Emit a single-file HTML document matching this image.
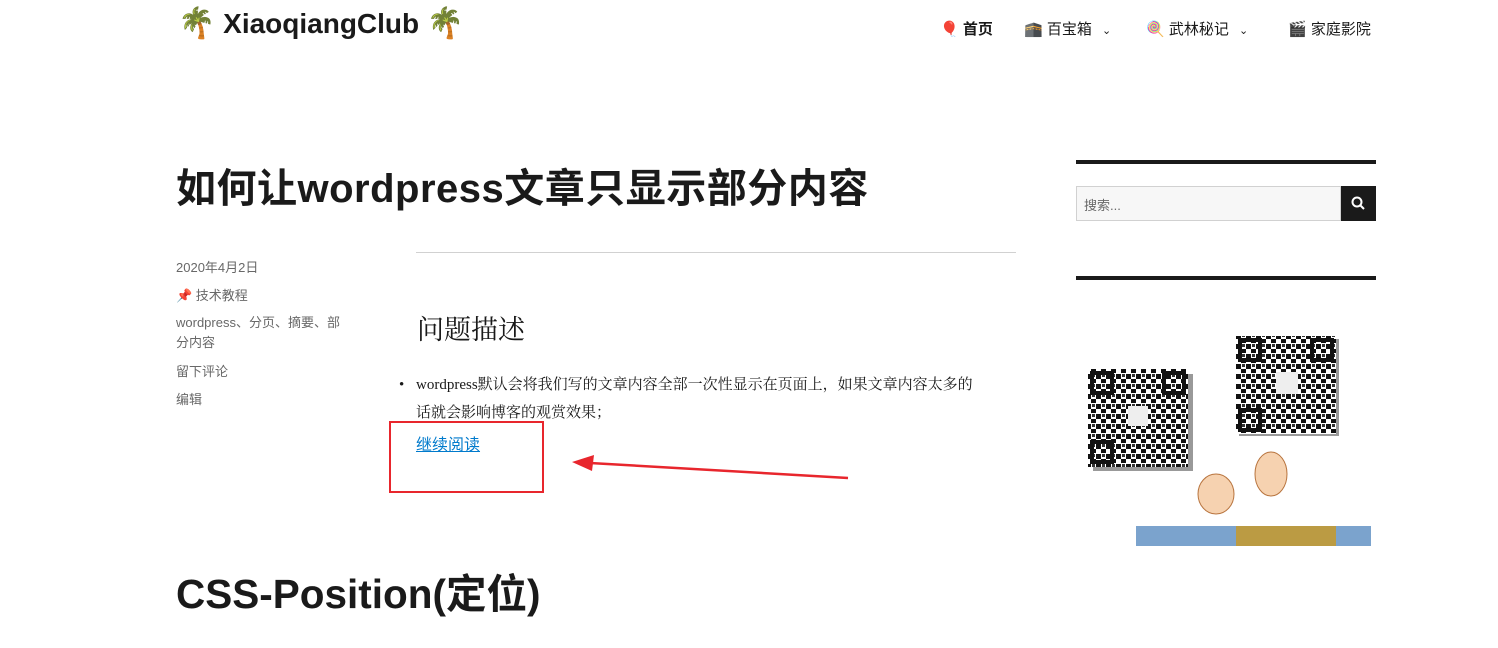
<!DOCTYPE html>
<html><head><meta charset="utf-8"><style>
*{margin:0;padding:0;box-sizing:border-box}
body{width:1498px;height:648px;background:#fff;font-family:"Liberation Sans","Noto Sans CJK SC",sans-serif;color:#1a1a1a;position:relative;overflow:hidden}
.a{position:absolute;white-space:nowrap}
.logo{left:178px;top:6px;font-size:28px;font-weight:bold}
.nav{top:18px;font-size:15px}
.meta{left:176px;font-size:13px;color:#686868}
</style></head><body>
<div class="a logo"><span style="font-size:30px">🌴</span> XiaoqiangClub <span style="font-size:30px">🌴</span></div>
<div class="a nav" style="left:940px;font-weight:bold">🎈 首页</div>
<div class="a nav" style="left:1024px">🕋 百宝箱 <span style="font-size:11px;margin-left:6px">⌄</span></div>
<div class="a nav" style="left:1146px">🍭 武林秘记 <span style="font-size:11px;margin-left:6px">⌄</span></div>
<div class="a nav" style="left:1288px">🎬 家庭影院</div>

<div class="a" style="left:176px;top:156px;font-size:40px;font-weight:bold;letter-spacing:0.5px">如何让wordpress文章只显示部分内容</div>
<div class="a meta" style="top:257px">2020年4月2日</div>
<div class="a meta" style="top:285px">📌 技术教程</div>
<div class="a meta" style="top:313px;line-height:20px;white-space:normal;width:175px">wordpress、分页、摘要、部分内容</div>
<div class="a meta" style="top:361px">留下评论</div>
<div class="a meta" style="top:389px">编辑</div>
<div class="a" style="left:416px;top:252px;width:600px;border-top:1px solid #d1d1d1"></div>
<div class="a" style="left:417px;top:308px;font-size:27px;font-family:'Liberation Serif','Noto Serif CJK SC',serif">问题描述</div>
<div class="a" style="left:399px;top:371px;font-size:15px;line-height:28px;font-family:'Liberation Serif','Noto Serif CJK SC',serif;white-space:normal;width:600px">
<span style="position:absolute;left:0">•</span><div style="margin-left:17px;width:566px">wordpress默认会将我们写的文章内容全部一次性显示在页面上，如果文章内容太多的话就会影响博客的观赏效果；</div></div>
<div class="a" style="left:416px;top:431px;font-size:16px;color:#007acc;text-decoration:underline">继续阅读</div>
<div class="a" style="left:389px;top:421px;width:155px;height:72px;border:2px solid #e8262d"></div>
<svg class="a" style="left:570px;top:452px" width="280" height="30"><line x1="278" y1="26" x2="20" y2="11" stroke="#e8262d" stroke-width="2.5"/><polygon points="2,10 24,3 22,19" fill="#e8262d"/></svg>
<div class="a" style="left:176px;top:561px;font-size:40.5px;font-weight:bold">CSS-Position(定位)</div>

<div class="a" style="left:1076px;top:160px;width:300px;border-top:4px solid #1a1a1a"></div>
<div class="a" style="left:1076px;top:186px;width:265px;height:35px;border:1px solid #d1d1d1;background:#f7f7f7;font-size:13px;color:#686868;padding:8px 7px">搜索...</div>
<div class="a" style="left:1341px;top:186px;width:35px;height:35px;background:#1a1a1a"><svg width="35" height="35"><circle cx="16" cy="16" r="4.5" stroke="#fff" stroke-width="2" fill="none"/><line x1="19.5" y1="19.5" x2="23" y2="23" stroke="#fff" stroke-width="2"/></svg></div>
<div class="a" style="left:1076px;top:276px;width:300px;border-top:4px solid #1a1a1a"></div>

<svg class="a" style="left:1086px;top:334px" width="300" height="220">
<defs><pattern id="p" width="10" height="10" patternUnits="userSpaceOnUse"><rect width="10" height="10" fill="#fff"/><rect width="5" height="5" fill="#111"/><rect x="5" y="5" width="5" height="4" fill="#111"/><rect x="6" y="0" width="3" height="3" fill="#333"/></pattern></defs>
<rect x="4" y="37" width="100" height="97" fill="#999" transform="translate(3,3)"/>
<rect x="2" y="35" width="100" height="98" fill="url(#p)"/>
<rect x="6" y="39" width="20" height="20" fill="none" stroke="#111" stroke-width="4"/>
<rect x="78" y="39" width="20" height="20" fill="none" stroke="#111" stroke-width="4"/>
<rect x="6" y="108" width="20" height="20" fill="none" stroke="#111" stroke-width="4"/>
<rect x="42" y="72" width="20" height="20" fill="#eee"/>
<rect x="153" y="5" width="100" height="97" fill="#999"/>
<rect x="150" y="2" width="100" height="98" fill="url(#p)"/>
<rect x="154" y="6" width="20" height="20" fill="none" stroke="#111" stroke-width="4"/>
<rect x="226" y="6" width="20" height="20" fill="none" stroke="#111" stroke-width="4"/>
<rect x="154" y="76" width="20" height="20" fill="none" stroke="#111" stroke-width="4"/>
<rect x="190" y="38" width="22" height="22" fill="#eee"/>
<ellipse cx="130" cy="160" rx="18" ry="20" fill="#f6d2b0" stroke="#b8743e"/>
<ellipse cx="185" cy="140" rx="16" ry="22" fill="#f6d2b0" stroke="#b8743e"/>
<rect x="50" y="192" width="235" height="20" fill="#5a8cc0" opacity=".8"/>
<rect x="150" y="192" width="100" height="20" fill="#c79a2a" opacity=".85"/>
</svg>
</body></html>
